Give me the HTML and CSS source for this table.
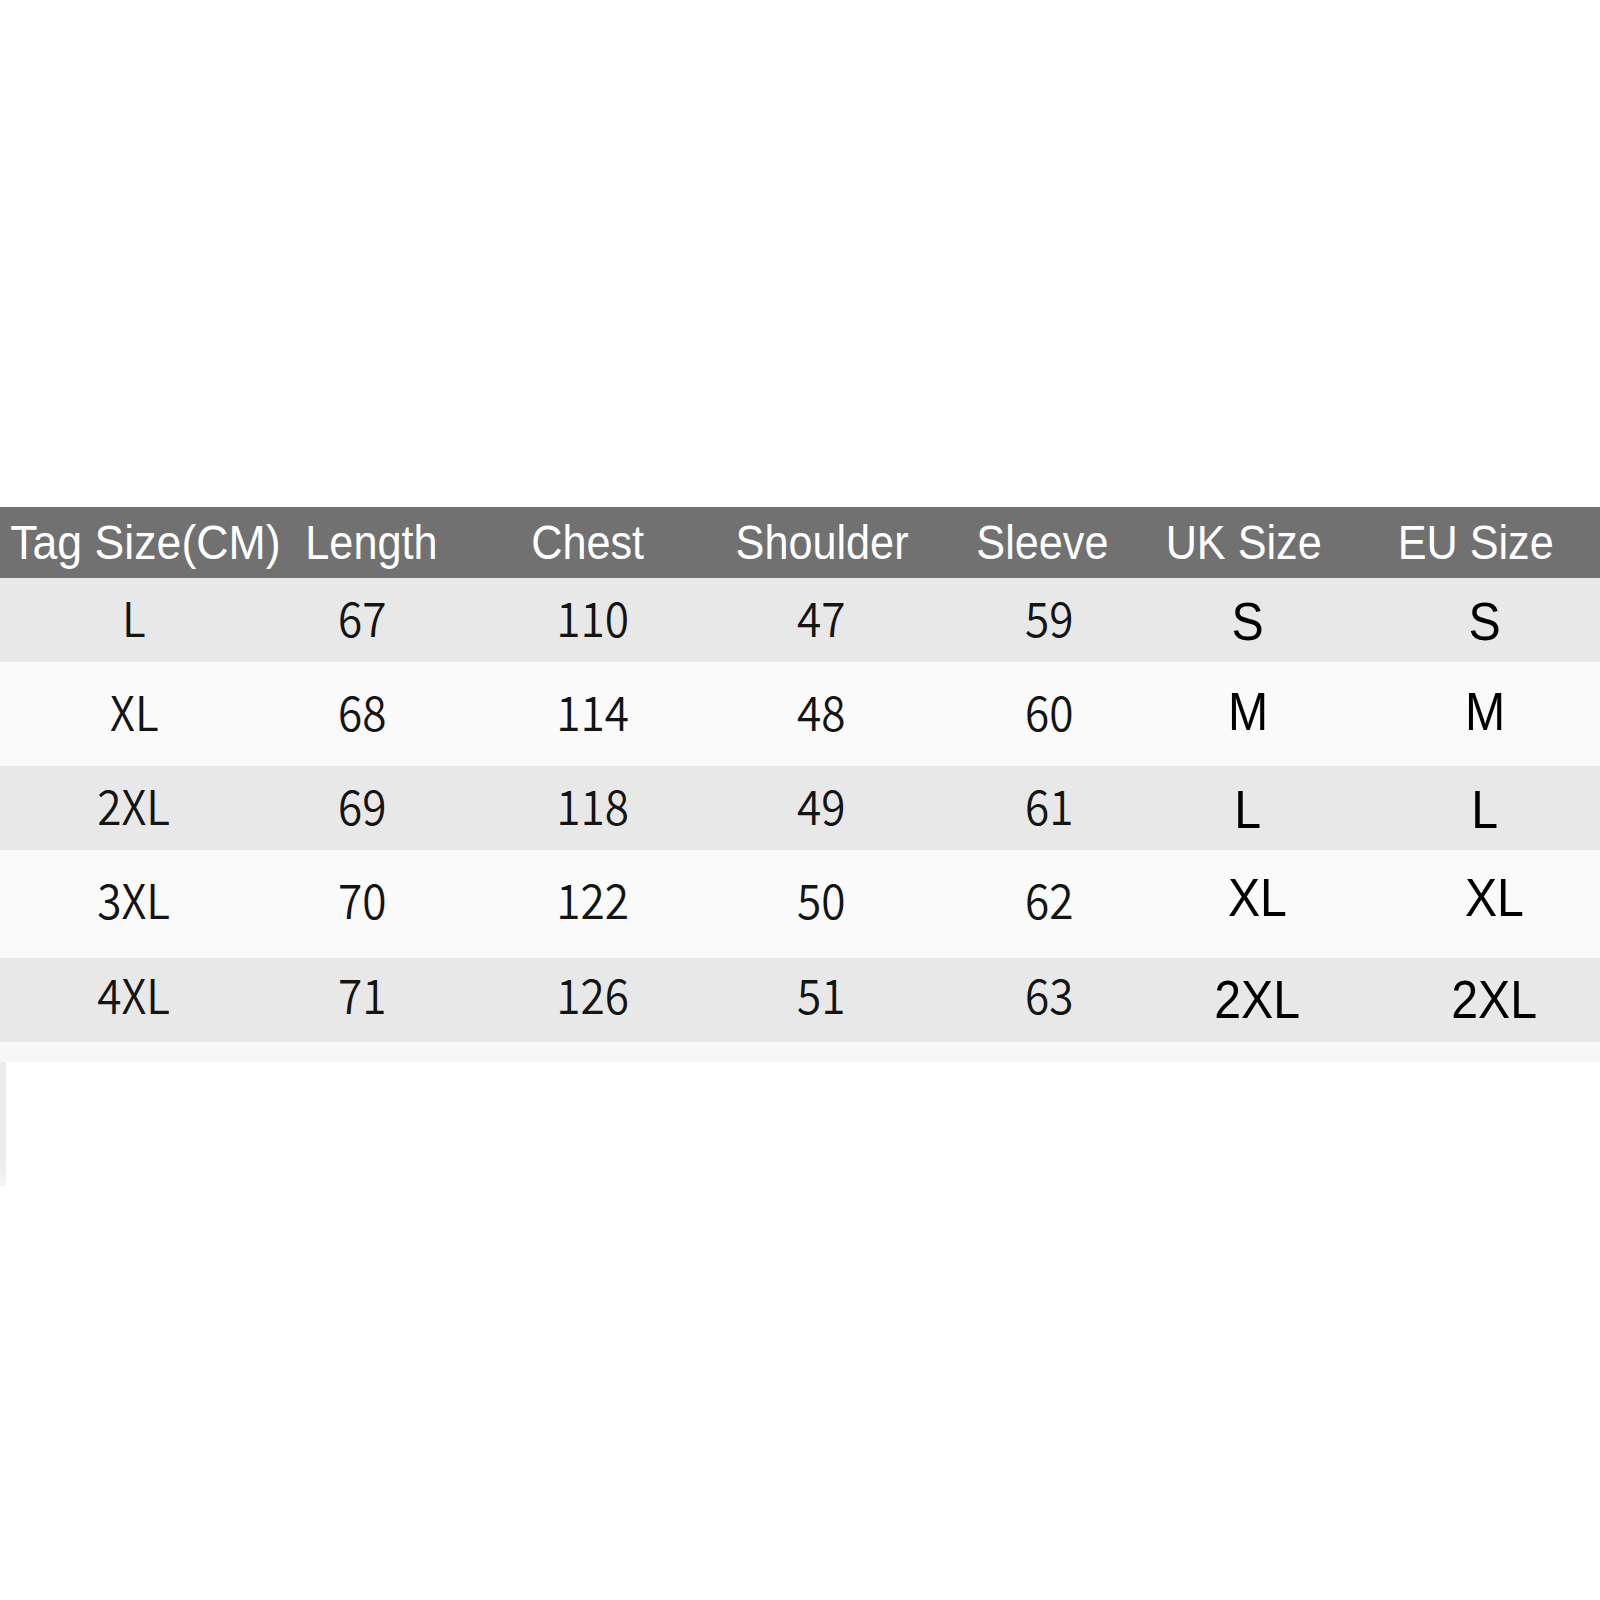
FILE: index.html
```html
<!DOCTYPE html>
<html>
<head>
<meta charset="utf-8">
<link rel="stylesheet" href="styles.css">
</head>
<body>
<div class="page">
  <div class="table">
    <div class="row head">
      <div class="cell"><span class="ht wide">Tag Size(CM)</span></div>
      <div class="cell"><span class="ht">Length</span></div>
      <div class="cell"><span class="ht">Chest</span></div>
      <div class="cell"><span class="ht">Shoulder</span></div>
      <div class="cell"><span class="ht">Sleeve</span></div>
      <div class="cell"><span class="ht">UK Size</span></div>
      <div class="cell last"><span class="ht">EU Size</span></div>
    </div>
    <div class="row data gray h84">
      <div class="cell"><span class="num">L</span></div>
      <div class="cell"><span class="num">67</span></div>
      <div class="cell"><span class="num">110</span></div>
      <div class="cell"><span class="num">47</span></div>
      <div class="cell"><span class="num">59</span></div>
      <div class="cell"><span class="sz">S</span></div>
      <div class="cell last"><span class="sz">S</span></div>
    </div>
    <div class="row data light h104">
      <div class="cell"><span class="num">XL</span></div>
      <div class="cell"><span class="num">68</span></div>
      <div class="cell"><span class="num">114</span></div>
      <div class="cell"><span class="num">48</span></div>
      <div class="cell"><span class="num">60</span></div>
      <div class="cell"><span class="sz up">M</span></div>
      <div class="cell last"><span class="sz up">M</span></div>
    </div>
    <div class="row data gray h84">
      <div class="cell"><span class="num">2XL</span></div>
      <div class="cell"><span class="num">69</span></div>
      <div class="cell"><span class="num">118</span></div>
      <div class="cell"><span class="num">49</span></div>
      <div class="cell"><span class="num">61</span></div>
      <div class="cell"><span class="sz">L</span></div>
      <div class="cell last"><span class="sz">L</span></div>
    </div>
    <div class="row data light h108 r4">
      <div class="cell"><span class="num">3XL</span></div>
      <div class="cell"><span class="num">70</span></div>
      <div class="cell"><span class="num">122</span></div>
      <div class="cell"><span class="num">50</span></div>
      <div class="cell"><span class="num">62</span></div>
      <div class="cell"><span class="sz up2 right">XL</span></div>
      <div class="cell last"><span class="sz up2 right">XL</span></div>
    </div>
    <div class="row data gray h84 r5">
      <div class="cell"><span class="num">4XL</span></div>
      <div class="cell"><span class="num">71</span></div>
      <div class="cell"><span class="num">126</span></div>
      <div class="cell"><span class="num">51</span></div>
      <div class="cell"><span class="num">63</span></div>
      <div class="cell"><span class="sz right">2XL</span></div>
      <div class="cell last"><span class="sz right">2XL</span></div>
    </div>
    <div class="faint"></div>
  </div>
  <div class="edge"></div>
</div>
</body>
</html>
```

FILE: styles.css
```css
html, body {
  margin: 0;
  padding: 0;
  background: #ffffff;
}

.page {
  width: 1600px;
  height: 1600px;
  padding-top: 507px;
  box-sizing: border-box;
  background: #ffffff;
  overflow: hidden;
}

.table {
  display: flex;
  flex-direction: column;
  width: 1600px;
}

.row {
  display: grid;
  align-items: center;
}

.head {
  height: 71px;
  background: #717171;
  grid-template-columns: 290px 162px 272px 196px 244px 160px 276px;
}

.head .last {
  padding-left: 28px;
}

.data {
  grid-template-columns: 268px 188px 274px 182px 274px 124px 290px;
}

.data .last {
  padding-left: 60px;
}

.cell {
  display: flex;
  justify-content: center;
  align-items: center;
  height: 100%;
  box-sizing: border-box;
}

.gray {
  background: #e8e8e8;
}

.light {
  background: #fafafa;
}

.faint {
  height: 20px;
  background: #f7f7f7;
}

.h84 { height: 84px; }
.h104 { height: 104px; }
.h108 { height: 108px; }

.ht {
  display: inline-block;
  font-family: "Liberation Sans", Arial, sans-serif;
  font-size: 48px;
  color: #ffffff;
  line-height: 1;
  transform: scaleX(0.9);
  white-space: nowrap;
}

.ht.wide {
  transform: scaleX(0.93);
}

.num {
  display: inline-block;
  font-family: "Noto Sans CJK SC", "Noto Sans", sans-serif;
  font-weight: 350;
  font-size: 48px;
  line-height: 1;
  color: #141414;
  transform: scaleX(0.92);
  white-space: nowrap;
  margin-bottom: 8px;
}

.r4 .num { margin-bottom: 12px; }
.r5 .num { margin-bottom: 14px; }

.sz {
  display: inline-block;
  font-family: "Liberation Sans", Arial, sans-serif;
  font-size: 53px;
  line-height: 1;
  color: #000000;
  transform: scaleX(0.91);
  white-space: nowrap;
  margin-top: 2px;
}

.sz.up { margin-top: 0; margin-bottom: 6px; }
.sz.up2 { margin-top: 0; margin-bottom: 14px; }
.r5 .sz { margin-top: 0; margin-bottom: 2px; }
.sz.right { margin-left: 18px; }

.edge {
  width: 6px;
  height: 124px;
  background: linear-gradient(#ececec 0, #ececec 82%, #f6f6f6 100%);
}
```
